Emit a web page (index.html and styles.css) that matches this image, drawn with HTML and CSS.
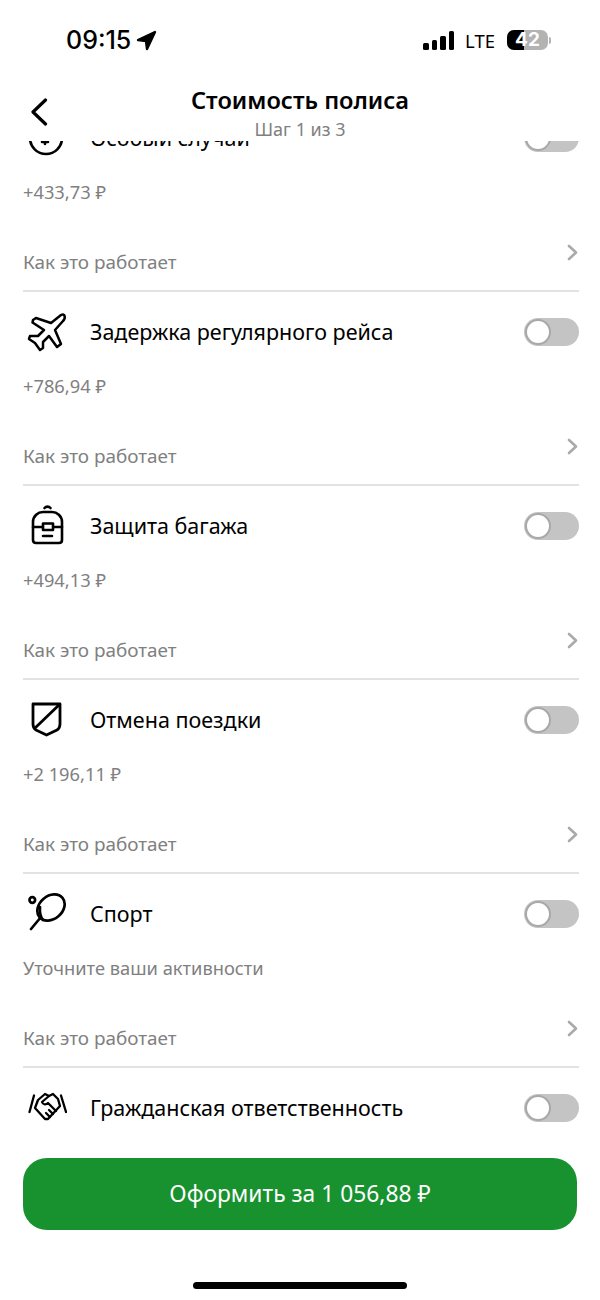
FILE: index.html
```html
<!DOCTYPE html>
<html lang="ru">
<head>
  <meta charset="UTF-8">
  <title>Стоимость полиса</title>
  <link rel="stylesheet" href="styles.css">
</head>
<body>

<div class="screen">
  <div class="status-bar">
    <div class="status-left">
      <span class="time">09:15</span>
      <svg class="loc-arrow" width="21" height="21" viewBox="0 0 21 21"><path d="M19 2 L2 10 L10 11 L11 19 Z" fill="#000" stroke="#000" stroke-width="2.400" stroke-linejoin="round"/></svg>
    </div>
    <div class="status-right">
      <div class="signal"><i class="s1"></i><i class="s2"></i><i class="s3"></i><i class="s4"></i></div>
      <span class="lte">LTE</span>
      <div class="battery"><div class="battery-fill"></div><span class="battery-num">42</span></div>
      <div class="battery-cap"></div>
    </div>
  </div>

  <div class="header">
    <svg class="back" width="18" height="28" viewBox="0 0 18 28"><path d="M15.500 2 L3 14 L15.500 26" fill="none" stroke="#000" stroke-width="3.200" stroke-linecap="round" stroke-linejoin="round"/></svg>
    <div class="header-title">Стоимость полиса</div>
    <div class="header-sub">Шаг 1 из 3</div>
  </div>

  <div class="list">
    <div class="list-inner">

      <div class="item">
        <div class="item-top">
          <div class="icon">
            <svg width="44" height="44" viewBox="0 0 44 44" fill="none" stroke="#000" stroke-width="2.600" stroke-linecap="round"><circle cx="23" cy="22" r="16"/><path d="M19 17h6a3 3 0 0 1 0 6h-6M22 14v14M19 26h6"/></svg>
          </div>
          <div class="item-title">Особый случай</div>
          <div class="toggle"></div>
        </div>
        <div class="item-price">+433,73 ₽</div>
        <div class="item-more"><span>Как это работает</span><svg class="chev" width="11" height="17" viewBox="0 0 11 17"><path d="M2 2 L9 8.500 L2 15" fill="none" stroke="#aaa" stroke-width="2.600" stroke-linecap="round" stroke-linejoin="round"/></svg></div>
      </div>

      <div class="item">
        <div class="item-top">
          <div class="icon">
            <svg width="44" height="44" viewBox="-2 0 44 44" fill="none" stroke="#000" stroke-width="2.500" stroke-linejoin="round"><path d="M36 5 L26 13 L11 8 L8 10 L7.500 12.500 L19 20 L13 26 L5 26 L4 29 L10 33 L15 40 L18 38 L18 32 L24 26 L32 37 L36 34 L30 20 L38 11 C41 8 40 3 36 5 Z"/></svg>
          </div>
          <div class="item-title">Задержка регулярного рейса</div>
          <div class="toggle"></div>
        </div>
        <div class="item-price">+786,94 ₽</div>
        <div class="item-more"><span>Как это работает</span><svg class="chev" width="11" height="17" viewBox="0 0 11 17"><path d="M2 2 L9 8.500 L2 15" fill="none" stroke="#aaa" stroke-width="2.600" stroke-linecap="round" stroke-linejoin="round"/></svg></div>
      </div>

      <div class="item">
        <div class="item-top">
          <div class="icon">
            <svg width="44" height="44" viewBox="-1 0 44 44" fill="none" stroke="#000" stroke-width="2.600" stroke-linecap="round" stroke-linejoin="round"><path d="M20.500 4a4 4 0 0 1 6 0"/><path d="M9 18c0-6 5-10 10-10h9c5 0 10 4 10 10v18c0 2-1 3-3 3H12c-2 0-3-1-3-3z"/><path d="M9 23h10M29 23h9M19 19.500h10v6.500H19zM19 32h9"/></svg>
          </div>
          <div class="item-title">Защита багажа</div>
          <div class="toggle"></div>
        </div>
        <div class="item-price">+494,13 ₽</div>
        <div class="item-more"><span>Как это работает</span><svg class="chev" width="11" height="17" viewBox="0 0 11 17"><path d="M2 2 L9 8.500 L2 15" fill="none" stroke="#aaa" stroke-width="2.600" stroke-linecap="round" stroke-linejoin="round"/></svg></div>
      </div>

      <div class="item">
        <div class="item-top">
          <div class="icon">
            <svg width="44" height="44" viewBox="0 0 44 44" fill="none" stroke="#000" stroke-width="2.800" stroke-linejoin="round"><path d="M10 6h27v20c0 3-1 5-3 6l-10.500 5L13 32c-2-1-3-3-3-6z"/><path d="M37 6L11 31"/></svg>
          </div>
          <div class="item-title">Отмена поездки</div>
          <div class="toggle"></div>
        </div>
        <div class="item-price">+2 196,11 ₽</div>
        <div class="item-more"><span>Как это работает</span><svg class="chev" width="11" height="17" viewBox="0 0 11 17"><path d="M2 2 L9 8.500 L2 15" fill="none" stroke="#aaa" stroke-width="2.600" stroke-linecap="round" stroke-linejoin="round"/></svg></div>
      </div>

      <div class="item">
        <div class="item-top">
          <div class="icon">
            <svg width="44" height="44" viewBox="0 0 44 44" fill="none" stroke="#000" stroke-width="2.700" stroke-linecap="round"><circle cx="9.300" cy="8" r="2.800"/><ellipse cx="28" cy="15.500" rx="15" ry="11.500" transform="rotate(-40 28 15.500)"/><path d="M18 25L8 37M17 15c-.5 5 0 9 3 13"/></svg>
          </div>
          <div class="item-title">Спорт</div>
          <div class="toggle"></div>
        </div>
        <div class="item-price">Уточните ваши активности</div>
        <div class="item-more"><span>Как это работает</span><svg class="chev" width="11" height="17" viewBox="0 0 11 17"><path d="M2 2 L9 8.500 L2 15" fill="none" stroke="#aaa" stroke-width="2.600" stroke-linecap="round" stroke-linejoin="round"/></svg></div>
      </div>

      <div class="item">
        <div class="item-top">
          <div class="icon">
            <svg width="44" height="44" viewBox="-2 0 44 44" fill="none" stroke="#000" stroke-width="2.300" stroke-linecap="round" stroke-linejoin="round"><path d="M9 9.500L4.500 26M36 9.500L41 26"/><path d="M13 14L20 8L24 10L28 8L33 13L35 20L23 33L20 33L10 22Z"/><path d="M24 10L17 16C18 19 21 19 23 17L31 25M28 28L24 24M25 31L21 27"/></svg>
          </div>
          <div class="item-title">Гражданская ответственность</div>
          <div class="toggle"></div>
        </div>
      </div>

    </div>
  </div>

  <div class="footer">
    <div class="buy-btn">Оформить за 1 056,88 ₽</div>
    <div class="home-bar"></div>
  </div>
</div>

</body>
</html>
```

FILE: styles.css
```css
body {
  font-family: 'Noto Sans', 'Open Sans', sans-serif;
  margin: 0;
  background: #fff;
  color: #000;
}

.screen {
  width: 600px;
  height: 1300px;
  display: flex;
  flex-direction: column;
  overflow: hidden;
  background: #fff;
}

/* Status bar */
.status-bar {
  height: 80px;
  display: flex;
  justify-content: space-between;
  align-items: center;
  flex-shrink: 0;
  box-sizing: border-box;
  padding: 0 49px 0 66px;
}

.status-left {
  display: flex;
  align-items: center;
  gap: 5px;
}

.time {
  font-family: 'Inter', sans-serif;
  font-size: 25px;
  font-weight: 500;
}

.status-right {
  display: flex;
  align-items: center;
}

.signal {
  display: flex;
  align-items: flex-end;
  gap: 3px;
  height: 19px;
  margin-right: 11px;
}

.signal i {
  display: block;
  width: 5.500px;
  background: #000;
  border-radius: 1.500px;
}

.s1 { height: 7px; }
.s2 { height: 10px; }
.s3 { height: 14px; }
.s4 { height: 19px; }

.lte {
  font-family: 'Noto Sans', sans-serif;
  font-size: 18.500px;
  margin-right: 12px;
}

.battery {
  position: relative;
  width: 41px;
  height: 20px;
  border-radius: 7px;
  background: #b3b3b3;
}

.battery-fill {
  width: 17px;
  height: 100%;
  background: #000;
  border-radius: 7px 0 0 7px;
}

.battery-num {
  position: absolute;
  top: 0;
  left: 0;
  width: 100%;
  text-align: center;
  font-family: 'Inter', sans-serif;
  font-size: 19px;
  font-weight: 700;
  line-height: 20px;
  color: #fff;
}

.battery-cap {
  width: 2px;
  height: 7px;
  margin-left: 1px;
  background: #b3b3b3;
  border-radius: 0 2px 2px 0;
}

/* Header */
.header {
  height: 61px;
  position: relative;
  flex-shrink: 0;
  text-align: center;
  background: #fff;
  z-index: 2;
}

.back {
  position: absolute;
  left: 30px;
  top: 18px;
}

.header-title {
  font-size: 23.600px;
  font-weight: 600;
  line-height: 30px;
  margin-top: 5px;
}

.header-sub {
  font-size: 18px;
  line-height: 24px;
  margin-top: 2px;
  color: #808080;
  position: relative;
}

/* List */
.list {
  flex: 1;
  overflow: hidden;
  padding: 0 21px 0 23px;
}

.list-inner {
  margin-top: -43px;
}

.item {
  height: 194px;
  box-sizing: border-box;
  border-bottom: 2px solid #e2e2e2;
  display: flex;
  flex-direction: column;
}

.item:last-child {
  border-bottom: none;
}

.item-top {
  height: 79px;
  display: flex;
  align-items: center;
  flex-shrink: 0;
}

.icon {
  width: 44px;
  height: 44px;
  margin-right: 23px;
}

.icon svg {
  display: block;
}

.item-title {
  flex: 1;
  font-size: 21.500px;
  font-weight: 400;
  color: #000;
}

.toggle {
  position: relative;
  width: 55px;
  height: 28px;
  border-radius: 14px;
  background: #c4c4c4;
}

.toggle::after {
  content: '';
  position: absolute;
  left: 1px;
  top: 1px;
  width: 22px;
  height: 22px;
  border: 2px solid #a8a8a8;
  border-radius: 50%;
  background: #fff;
}

.item-price {
  font-size: 18.300px;
  line-height: 24px;
  color: #808080;
  margin-top: 3px;
}

.item-more {
  display: flex;
  justify-content: space-between;
  margin-top: 43px;
  font-size: 18.900px;
  line-height: 30px;
  color: #808080;
}

.chev {
  margin-right: 1px;
  margin-top: -3px;
}

/* Footer */
.footer {
  height: 166px;
  flex-shrink: 0;
  box-sizing: border-box;
  padding: 24px 23px 0;
  background: #fff;
  display: flex;
  flex-direction: column;
  align-items: center;
}

.buy-btn {
  width: 100%;
  height: 72px;
  border-radius: 24px;
  background: #18922f;
  color: #fff;
  font-size: 22.800px;
  font-weight: 400;
  line-height: 72px;
  text-align: center;
}

.home-bar {
  width: 214px;
  height: 7px;
  margin-top: 52px;
  border-radius: 4px;
  background: #000;
}
```
